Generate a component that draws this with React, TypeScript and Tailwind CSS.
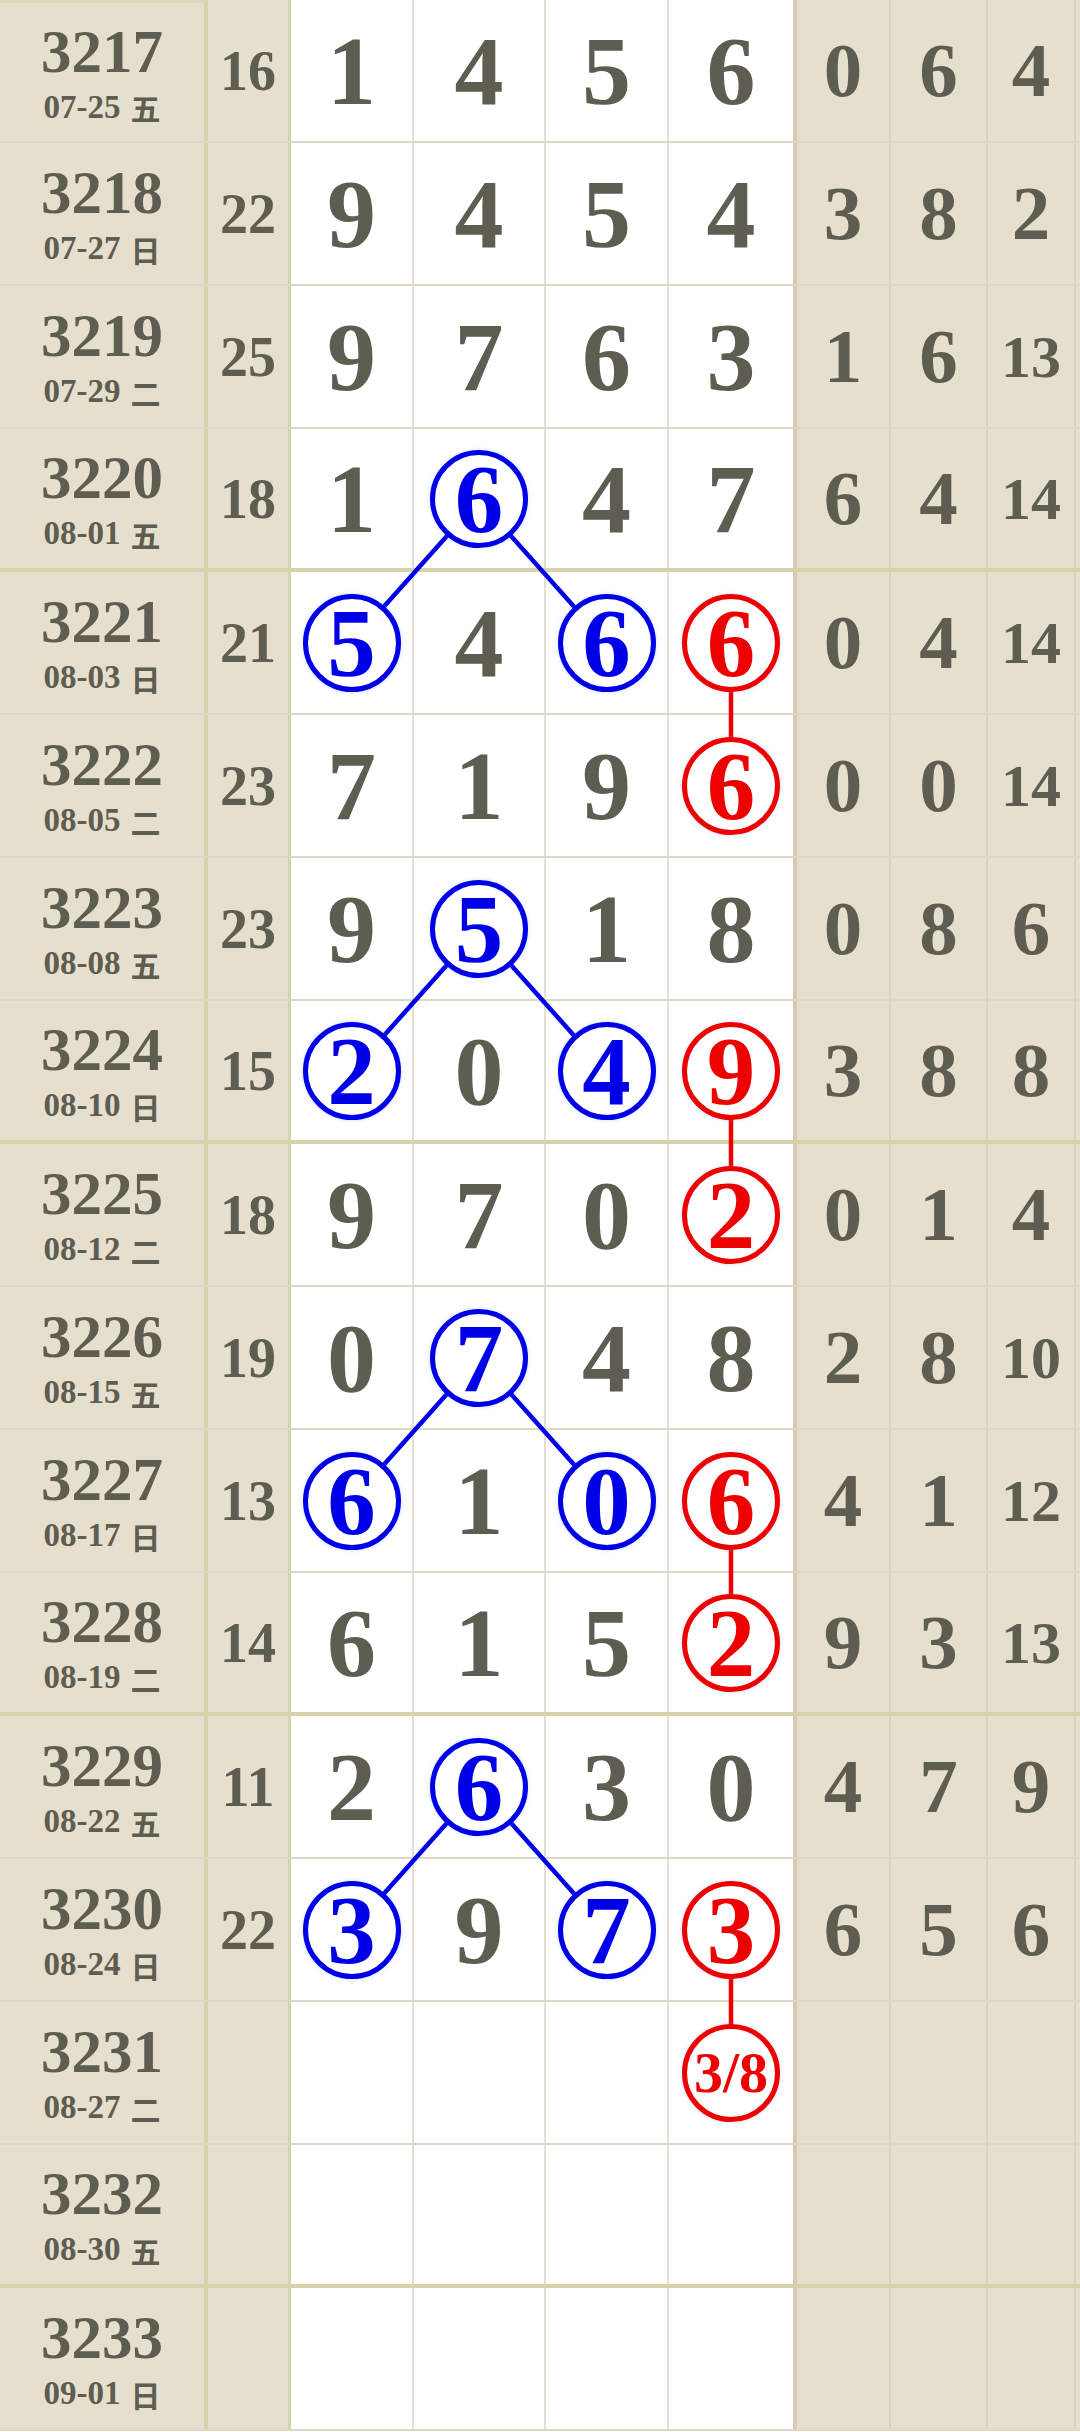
import React from "react";

type Row = {
  id: string;
  date: string;
  wd: string;
  sum?: string;
  d?: string[];
  s?: string[];
};

const rows: Row[] = [
  { id: "3217", date: "07-25", wd: "五", sum: "16", d: ["1", "4", "5", "6"], s: ["0", "6", "4"] },
  { id: "3218", date: "07-27", wd: "日", sum: "22", d: ["9", "4", "5", "4"], s: ["3", "8", "2"] },
  { id: "3219", date: "07-29", wd: "二", sum: "25", d: ["9", "7", "6", "3"], s: ["1", "6", "13"] },
  { id: "3220", date: "08-01", wd: "五", sum: "18", d: ["1", "6", "4", "7"], s: ["6", "4", "14"] },
  { id: "3221", date: "08-03", wd: "日", sum: "21", d: ["5", "4", "6", "6"], s: ["0", "4", "14"] },
  { id: "3222", date: "08-05", wd: "二", sum: "23", d: ["7", "1", "9", "6"], s: ["0", "0", "14"] },
  { id: "3223", date: "08-08", wd: "五", sum: "23", d: ["9", "5", "1", "8"], s: ["0", "8", "6"] },
  { id: "3224", date: "08-10", wd: "日", sum: "15", d: ["2", "0", "4", "9"], s: ["3", "8", "8"] },
  { id: "3225", date: "08-12", wd: "二", sum: "18", d: ["9", "7", "0", "2"], s: ["0", "1", "4"] },
  { id: "3226", date: "08-15", wd: "五", sum: "19", d: ["0", "7", "4", "8"], s: ["2", "8", "10"] },
  { id: "3227", date: "08-17", wd: "日", sum: "13", d: ["6", "1", "0", "6"], s: ["4", "1", "12"] },
  { id: "3228", date: "08-19", wd: "二", sum: "14", d: ["6", "1", "5", "2"], s: ["9", "3", "13"] },
  { id: "3229", date: "08-22", wd: "五", sum: "11", d: ["2", "6", "3", "0"], s: ["4", "7", "9"] },
  { id: "3230", date: "08-24", wd: "日", sum: "22", d: ["3", "9", "7", "3"], s: ["6", "5", "6"] },
  { id: "3231", date: "08-27", wd: "二", d: ["", "", "", "3/8"] },
  { id: "3232", date: "08-30", wd: "五" },
  { id: "3233", date: "09-01", wd: "日" },
];

const marks: Record<string, "blue" | "red"> = {
  "3-1": "blue", "4-0": "blue", "4-2": "blue",
  "6-1": "blue", "7-0": "blue", "7-2": "blue",
  "9-1": "blue", "10-0": "blue", "10-2": "blue",
  "12-1": "blue", "13-0": "blue", "13-2": "blue",
  "4-3": "red", "5-3": "red",
  "7-3": "red", "8-3": "red",
  "10-3": "red", "11-3": "red",
  "13-3": "red", "14-3": "red",
};

const groupEnds = new Set([3, 7, 11, 15]);

const ROW_H = 143;
const colX = [351.5, 479, 606.5, 731];
const rowC = (i: number) => ROW_H * i + 71;

const FONT = { fontFamily: '"Liberation Serif", "Noto Sans CJK SC", serif' };

const digitW = ["w-[123px]", "w-[132px]", "w-[123px]", "w-[128px]"];
const statW = ["w-[94px]", "w-[97px]", "w-[88px]"];

function DigitCell({ value, col, row }: { value: string; col: number; row: number }) {
  const mark = marks[`${row}-${col}`];
  const border =
    col === 3 ? "border-r-4 border-r-[#dcc7b4]" : "border-r-2 border-r-[#e3e0d3]";
  return (
    <div className={`${digitW[col]} ${border} flex h-full items-center justify-center bg-white`}>
      {mark ? (
        <div
          className={`relative z-20 flex h-[98px] w-[98px] items-center justify-center rounded-full border-[5px] bg-white font-bold leading-none shadow-[0_0_4px_rgba(120,160,255,0.35)] ${
            mark === "blue" ? "border-[#0000e8] text-[#0000e8]" : "border-[#ec0000] text-[#ec0000]"
          } ${value.length > 1 ? "text-[58px]" : "text-[97px]"}`}
        >
          <span className={value.length > 1 ? "" : "mt-[2px]"}>{value}</span>
        </div>
      ) : (
        <span className="text-[98px] font-bold leading-none text-[#5e5d52]">{value}</span>
      )}
    </div>
  );
}

export default function App() {
  const blueLines: [number, number, number, number][] = [];
  [3, 6, 9, 12].forEach((r) => {
    blueLines.push([colX[1], rowC(r), colX[0], rowC(r + 1)]);
    blueLines.push([colX[1], rowC(r), colX[2], rowC(r + 1)]);
  });
  const redLines: [number, number, number, number][] = [4, 7, 10, 13].map((r) => [
    colX[3],
    rowC(r),
    colX[3],
    rowC(r + 1),
  ]);

  return (
    <div className="relative w-[1080px] overflow-hidden bg-[#e6dfcd]" style={FONT}>
      {rows.map((r, i) => {
        const thick = groupEnds.has(i);
        const rb = thick ? "border-b-4 border-b-[#d6d3aa]" : "border-b-2 border-b-[#dcd7c6]";
        return (
          <div key={r.id} className={`flex h-[143px] ${rb}`}>
            <div
              className={`flex h-full w-[208px] flex-col items-center justify-center gap-[9px] border-r-4 border-r-[#d6d2a9] bg-[#e6dfcd] text-[#5e5d52] ${
                i === 0 ? "border-t-[3px] border-t-[#dcd7bb]" : ""
              }`}
            >
              <div className="text-[61px] font-bold leading-none">{r.id}</div>
              <div className="flex items-center text-[33px] font-bold leading-none">
                <span>{r.date}</span>
                <span
                  className="ml-[10px] text-[30px] font-bold"
                  style={{ fontFamily: '"Noto Sans CJK SC", sans-serif' }}
                >
                  {r.wd}
                </span>
              </div>
            </div>
            <div className="flex h-full w-[83px] items-center justify-center border-r-[3px] border-r-[#d2d5b0] bg-[#e6dfcd] text-[56px] font-bold leading-none text-[#5e5d52]">
              {r.sum ?? ""}
            </div>
            {[0, 1, 2, 3].map((c) => (
              <DigitCell key={c} value={r.d ? r.d[c] : ""} col={c} row={i} />
            ))}
            {[0, 1, 2].map((c) => {
              const v = r.s ? r.s[c] : "";
              return (
                <div
                  key={c}
                  className={`${statW[c]} flex h-full items-center justify-center border-r-2 border-r-[#d9d2c1] bg-[#e6dfcd] font-bold leading-none text-[#5e5d52] ${
                    v.length > 1 ? "text-[60px]" : "text-[77px]"
                  }`}
                >
                  {v}
                </div>
              );
            })}
            <div className="h-full flex-1 bg-[#e6dfcd]" />
          </div>
        );
      })}
      <svg
        className="pointer-events-none absolute left-0 top-0 z-10"
        width={1080}
        height={2432}
        viewBox="0 0 1080 2432"
      >
        {blueLines.map(([x1, y1, x2, y2], k) => (
          <line key={`b${k}`} x1={x1} y1={y1} x2={x2} y2={y2} stroke="#0000e8" strokeWidth={4.5} />
        ))}
        {redLines.map(([x1, y1, x2, y2], k) => (
          <line key={`r${k}`} x1={x1} y1={y1} x2={x2} y2={y2} stroke="#ec0000" strokeWidth={4.5} />
        ))}
      </svg>
    </div>
  );
}
